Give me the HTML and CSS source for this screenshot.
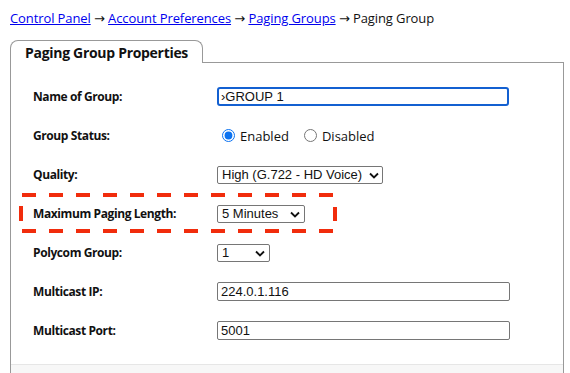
FILE: index.html
```html
<!DOCTYPE html>
<html lang="en">
<head>
    <meta charset="UTF-8">
    <title>Paging Group</title>
    <link rel="stylesheet" href="styles.css">
</head>
<body>
    <div class="crumbs">
        <a href="#">Control Panel</a> &rarr; <a href="#">Account Preferences</a> &rarr; <a href="#">Paging Groups</a> &rarr; Paging Group
    </div>

    <div class="tabs">
        <div class="tab">Paging Group Properties</div>
    </div>

    <div class="panel">
        <div class="form">
            <div class="row">
                <label class="label">Name of Group:</label>
                <input type="text" class="field field-wide is-focus" value="›GROUP 1">
            </div>
            <div class="row">
                <span class="label">Group Status:</span>
                <div class="radios">
                    <label class="radio"><input type="radio" name="status" checked> Enabled</label>
                    <label class="radio"><input type="radio" name="status"> Disabled</label>
                </div>
            </div>
            <div class="row">
                <label class="label">Quality:</label>
                <div class="select-wrap">
                    <select class="select select-quality">
                        <option>High (G.722 - HD Voice)</option>
                    </select>
                    <svg class="chevron" width="10" height="7" viewBox="0 0 10 7"><path d="M1 1.5 L5 5.5 L9 1.5" fill="none" stroke="#111" stroke-width="1.8"/></svg>
                </div>
            </div>
            <div class="row">
                <label class="label">Maximum Paging Length:</label>
                <div class="select-wrap">
                    <select class="select select-length">
                        <option>5 Minutes</option>
                    </select>
                    <svg class="chevron" width="10" height="7" viewBox="0 0 10 7"><path d="M1 1.5 L5 5.5 L9 1.5" fill="none" stroke="#111" stroke-width="1.8"/></svg>
                </div>
            </div>
            <div class="row">
                <label class="label">Polycom Group:</label>
                <div class="select-wrap">
                    <select class="select select-small">
                        <option>1</option>
                    </select>
                    <svg class="chevron" width="10" height="7" viewBox="0 0 10 7"><path d="M1 1.5 L5 5.5 L9 1.5" fill="none" stroke="#111" stroke-width="1.8"/></svg>
                </div>
            </div>
            <div class="row">
                <label class="label">Multicast IP:</label>
                <input type="text" class="field field-wide" value="224.0.1.116">
            </div>
            <div class="row">
                <label class="label">Multicast Port:</label>
                <input type="text" class="field field-wide" value="5001">
            </div>
        </div>
        <div class="panel-footer"></div>
    </div>

    <!-- annotation drawn over the form -->
    <svg class="highlight" width="322" height="42" viewBox="0 0 322 42">
        <line x1="3" y1="2" x2="320" y2="2" stroke="#f12c0c" stroke-width="4" stroke-dasharray="14 13"/>
        <line x1="3" y1="38" x2="320" y2="38" stroke="#f12c0c" stroke-width="4" stroke-dasharray="14 13"/>
        <line x1="2" y1="13" x2="2" y2="28" stroke="#f12c0c" stroke-width="4"/>
        <line x1="316" y1="14" x2="316" y2="28" stroke="#f12c0c" stroke-width="4"/>
    </svg>
</body>
</html>
```

FILE: styles.css
```css
* {
    box-sizing: border-box;
}

body {
    margin: 0;
    padding: 9px 6px 0 10px;
    font-family: 'Open Sans', 'DejaVu Sans', sans-serif;
    color: #111;
    background: #fff;
    position: relative;
}

.crumbs {
    font-size: 13px;
    line-height: 18px;
    letter-spacing: -0.1px;
}

.crumbs a {
    color: #0000ee;
}

.tabs {
    display: flex;
    margin-top: 13px;
}

.tab {
    width: 193px;
    height: 23px;
    border: 1px solid #999;
    border-bottom: none;
    border-radius: 8px 8px 0 0;
    background: #fff;
    padding: 2px 0 0 14px;
    font-size: 14px;
    font-weight: bold;
    letter-spacing: -0.3px;
    margin-bottom: -1px;
    position: relative;
    z-index: 1;
}

.panel {
    border: 1px solid #999;
    border-bottom: none;
    height: 312px;
    display: flex;
    flex-direction: column;
}

.form {
    flex: 1;
    padding: 14px 0 0 22px;
}

.row {
    display: grid;
    grid-template-columns: 184px 1fr;
    align-items: center;
    height: 39px;
}

.label {
    font-size: 12px;
    font-weight: bold;
    letter-spacing: -0.4px;
}

.field {
    font-family: 'Liberation Sans', Arial, sans-serif;
    font-size: 13px;
    color: #111;
    height: 19px;
    border: 1px solid #767676;
    border-radius: 2px;
    padding: 0 3px;
    outline: none;
}

.field-wide {
    width: 293px;
}

.is-focus {
    width: 292px;
    border: 2px solid #1360d1;
    border-radius: 3px;
    padding: 0 2px;
}

.radios {
    display: flex;
    gap: 10px;
    font-size: 13px;
}

.radio {
    display: flex;
    align-items: center;
    gap: 1px;
}

.radio input {
    margin: 0 4px 0 5px;
    width: 13px;
    height: 13px;
    accent-color: #0b72f0;
}

.select-wrap {
    position: relative;
    display: flex;
}

.select {
    appearance: none;
    font-family: 'Liberation Sans', Arial, sans-serif;
    font-size: 13px;
    color: #111;
    height: 18px;
    border: 1px solid #767676;
    border-radius: 2px;
    background: #fff;
    padding: 0 4px;
}

.select-quality {
    width: 166px;
}

.select-length {
    width: 88px;
}

.select-small {
    width: 53px;
}

.chevron {
    position: absolute;
    top: 6px;
    left: 0;
    pointer-events: none;
}

.select-quality + .chevron {
    left: 152px;
}

.select-length + .chevron {
    left: 73px;
}

.select-small + .chevron {
    left: 38px;
}

.panel-footer {
    height: 10px;
    border-top: 1px solid #e6e6e6;
    background: #f7f7f7;
}

.highlight {
    position: absolute;
    left: 19px;
    top: 193px;
}
```
